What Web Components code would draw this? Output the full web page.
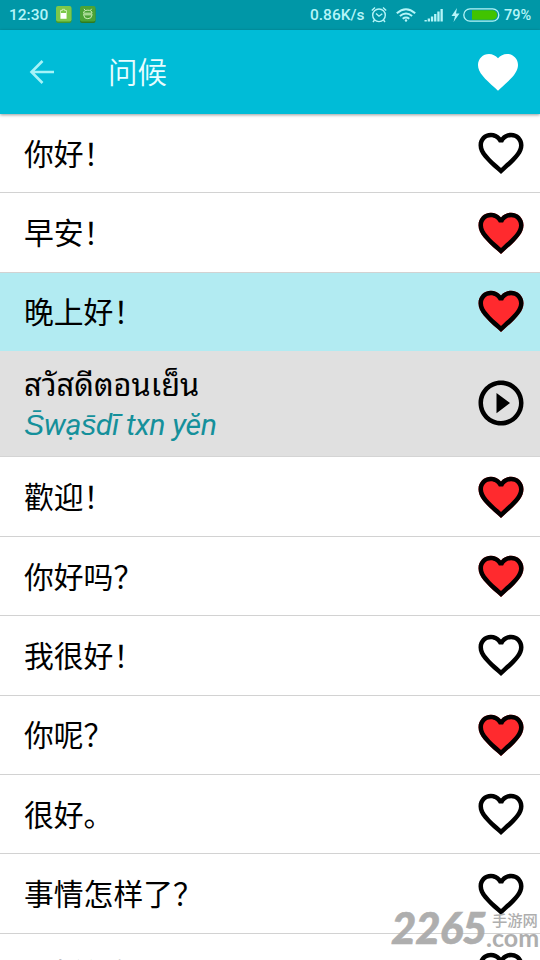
<!DOCTYPE html>
<html lang="zh-CN">
<head>
<meta charset="utf-8">
<title>问候</title>
<style>
body{margin:0;width:540px;height:960px;overflow:hidden;background:#fff}
</style>
</head>
<body>
<phrase-app></phrase-app>
<script>
const HEART='M12 21.35l-1.45-1.32C5.4 15.36 2 12.28 2 8.5 2 5.42 4.42 3 7.5 3c1.74 0 3.41.81 4.5 2.09C13.09 3.81 14.76 3 16.5 3 19.58 3 22 5.42 22 8.5c0 3.78-3.4 6.86-8.55 11.54L12 21.35z';
const BORDER='M16.5 3c-1.74 0-3.41.81-4.5 2.09C10.91 3.81 9.24 3 7.5 3 4.42 3 2 5.42 2 8.5c0 3.78 3.4 6.86 8.55 11.54L12 21.35l1.45-1.32C18.6 15.36 22 12.28 22 8.5 22 5.42 19.58 3 16.5 3zm-4.4 15.55l-.1.1-.1-.1C7.14 14.24 4 11.39 4 8.5 4 6.5 5.5 5 7.5 5c1.54 0 3.04.99 3.57 2.36h1.87C13.46 5.99 14.96 5 16.5 5c2 0 3.5 1.5 3.5 3.5 0 2.89-3.14 5.74-7.9 10.05z';
function define(name,html,connected){
  customElements.define(name,class extends HTMLElement{
    constructor(){super();const t=document.createElement('template');t.innerHTML=html;
      this.attachShadow({mode:'open'}).append(t.content.cloneNode(true));}
    connectedCallback(){if(connected)connected(this);}
  });
}
define('heart-icon',`<style>:host{display:block;flex:none;width:54px;height:54px}svg{display:block;width:100%;height:100%}
.red,.white{display:none}:host([kind=red]) .red{display:block}:host([kind=white]) .white{display:block}:host([kind=white]) .edge{display:none}</style>
<svg viewBox="0 0 24 24"><path class="red" fill="#ff2a2e" d="${HEART}"/><path class="white" fill="#fff" d="${HEART}"/><path class="edge" d="${BORDER}"/></svg>`);
define('status-bar',`<style>:host{display:flex;align-items:center;height:30px;box-sizing:border-box;padding:0 9px;background:#0097a7;color:#b5f5f8;font:500 15.5px/30px Roboto,sans-serif}
svg{display:block;flex:none}.grow{flex:1}.t{white-space:nowrap}</style>
<span class="t" style="width:47px">12:30</span>
<svg width="16" height="18" viewBox="0 0 16 18"><rect y="1" width="15.5" height="16" rx="2" fill="#459a2a"/><rect width="15.5" height="15.5" rx="2" fill="#7cc84a"/><path d="M6.3 3.3h2.4v1.2h1.800v8h-6v-8h1.800z" fill="none" stroke="#d9f5c4" stroke-width=".8"/><rect x="5" y="7" width="5" height="5.500" fill="#fff"/></svg>
<svg style="margin-left:8px" width="16" height="18" viewBox="0 0 16 18"><rect y="1" width="15.5" height="16" rx="2" fill="#2f7c20"/><rect width="15.5" height="15.5" rx="2" fill="#4ba336"/><path d="M3.600 7.200q0-3 4.200-3t4.200 3zM3 8.800h9.600M3.800 9.200q0 3.500 4 3.500t4-3.500M5 4.300L4 2.800M10.600 4.300l1-1.500" fill="none" stroke="#ccefb8" stroke-width="1"/></svg>
<span class="grow"></span>
<span class="t" style="width:61px">0.86K/s</span>
<svg width="16" height="18" viewBox="0 0 16 18" fill="none" stroke="#b5f5f8" stroke-width="1.4"><circle cx="8" cy="9.300" r="6.300"/><path d="M5 7.500l3 2.700 3.300-2.500M.8 4.500l3.200-3M15.200 4.500l-3.200-3M3.500 14l-1.500 2M12.500 14l1.500 2"/></svg>
<svg style="margin-left:9px" width="20" height="14" viewBox="0 0 20 14" fill="none" stroke="#b5f5f8" stroke-width="2"><path d="M.8 5.200q9.200-8 18.400 0M3.900 8.100q6.100-5.200 12.200 0M6.700 10.800q3.300-2.500 6.600 0"/><circle cx="10" cy="12.500" r="1.200" fill="#b5f5f8" stroke="none"/></svg>
<svg style="margin-left:8px" width="20" height="14" viewBox="0 0 20 14" fill="#b5f5f8"><path d="M.5 12h2.300v1.500H.5zM3.700 10.500H6v3H3.700zM6.900 8.500h2.300v5H6.900zM10.100 6h2.300v7.500h-2.300zM13.300 3.500h2.300v10h-2.300zM16.500 1h2.300v12.500h-2.300z"/></svg>
<svg style="margin-left:7px" width="9" height="16" viewBox="0 0 9 16" fill="#b5f5f8"><path d="M6 1L.5 9H4L2.500 15 8.500 6.500H5z"/></svg>
<svg style="margin:0 4px 0 3px" width="37" height="14" viewBox="0 0 37 14"><rect x=".8" y=".8" width="35" height="12.400" rx="6.200" fill="none" stroke="#b5f5f8" stroke-width="1.300"/><path d="M9 2.300h20.500a4.700 4.700 0 010 9.400H9z" fill="#41c300"/></svg>
<span class="t" style="font-size:14.500px;line-height:28px;padding-top:2px;width:27px">79%</span>`);
define('app-bar',`<style>:host{display:flex;align-items:center;height:84px;box-sizing:border-box;padding:0 18px 0 28px;background:#00bcd7;box-shadow:0 1px 3px #0006;position:relative;color:#e8fdff;font:350 29.500px/81px "Noto Sans CJK SC",sans-serif}
.title{margin-left:52px;flex:1;padding-bottom:3px}</style>
<svg width="28" height="28" viewBox="0 0 28 28" fill="none" stroke="#a5f3f8" stroke-width="2.600"><path d="M26 14H4M14.500 3L3.500 14l11 11"/></svg>
<span class="title"><slot></slot></span><heart-icon kind="white" style="width:48px;height:48px"></heart-icon>`);
define('phrase-row',`<style>:host{display:flex;align-items:center;justify-content:space-between;flex:none;height:79.400px;box-sizing:border-box;padding:0 12px 0 24px;border-bottom:1px solid #d2d2d2;color:#000;font:400 29.800px/75px "Noto Sans CJK SC",sans-serif;white-space:nowrap}
span{padding-bottom:2px}
:host([selected]){background:#b2ebf2;border-bottom-color:#b2ebf2;height:78.400px}</style><span><slot></slot></span><heart-icon></heart-icon>`,
el=>{if(el.hasAttribute('liked'))el.shadowRoot.querySelector('heart-icon').setAttribute('kind','red');});
define('phrase-detail',`<style>:host{display:flex;align-items:center;justify-content:space-between;flex:none;height:106.300px;box-sizing:border-box;padding:0 12px 2px 24px;background:#e0e0e0;border-bottom:1px solid #d4d4d4}
.text{display:grid;grid-template-rows:42px 41px;padding-top:2px;line-height:41px;white-space:nowrap;font-family:Roboto,"Liberation Sans",sans-serif}
.thai{font-family:"Noto Sans Thai Looped","Noto Looped Thai","Loma","Garuda","Droid Sans Thai",sans-serif;font-size:30.800px;color:#000}.latin{font-size:30.200px;font-style:italic;color:#15909b}</style>
<div class="text"><span class="thai"><slot name="thai"></slot></span><span class="latin"><slot></slot></span></div>
<svg width="54" height="54" viewBox="0 0 24 24"><path d="M10 16.500l6-4.500-6-4.500v9zM12 2C6.480 2 2 6.480 2 12s4.480 10 10 10 10-4.480 10-10S17.520 2 12 2zm0 18c-4.410 0-8-3.590-8-8s3.590-8 8-8 8 3.590 8 8-3.590 8-8 8z"/></svg>`);
define('site-mark',`<style>:host{position:absolute;left:391px;top:904px;display:flex;color:#aaa;font-family:"Noto Sans CJK SC",sans-serif;white-space:nowrap;opacity:.94}
.n{font:italic 900 43.500px/46px Lato,sans-serif;width:95px;letter-spacing:-.9px;-webkit-text-stroke:.6px #aaa}.r{display:grid;grid-template-rows:17px 18px;width:55px;padding-top:7px}
.c{font-size:15.300px;line-height:17px;font-weight:500;padding-left:6px}.d{font:700 25px/18px Lato,sans-serif}</style>
<span class="n">2265</span><span class="r"><span class="c">手游网</span><span class="d">.com</span></span>`);
define('phrase-app',`<style>:host{display:flex;flex-direction:column;height:960px;width:540px;overflow:hidden;position:relative}</style>
<status-bar></status-bar><app-bar>问候</app-bar>
<phrase-row>你好！</phrase-row><phrase-row liked>早安！</phrase-row><phrase-row liked selected>晚上好！</phrase-row>
<phrase-detail><span slot="thai">สวัสดีตอนเย็น</span><span style="letter-spacing:-.35px">S̄wạs̄dī txn yĕn</span></phrase-detail>
<phrase-row liked>歡迎！</phrase-row><phrase-row liked>你好吗？</phrase-row><phrase-row>我很好！</phrase-row><phrase-row liked>你呢？</phrase-row><phrase-row>很好。</phrase-row><phrase-row>事情怎样了？</phrase-row><phrase-row><span style="display:block;padding-top:1px">一样很好！</span></phrase-row>
<site-mark></site-mark>`);
</script>
</body>
</html>
